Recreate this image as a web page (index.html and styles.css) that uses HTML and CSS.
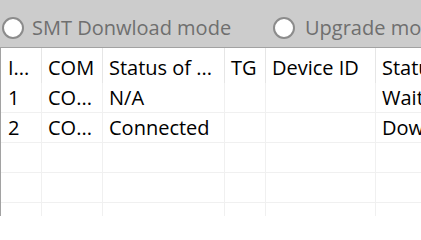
FILE: index.html
```html
<!DOCTYPE html>
<html>
<head>
<meta charset="utf-8">
<link rel="stylesheet" href="styles.css">
</head>
<body>
<div class="app">
  <div class="modes">
    <label class="radio"><span class="dot"></span><span class="txt">SMT Donwload mode</span></label>
    <label class="radio"><span class="dot"></span><span class="txt">Upgrade mode</span></label>
  </div>
  <div class="grid">
    <div class="row head">
      <div class="c c1">I...</div>
      <div class="c c2">COM</div>
      <div class="c c3">Status of ...</div>
      <div class="c c4">TG</div>
      <div class="c c5">Device ID</div>
      <div class="c c6">Status</div>
    </div>
    <div class="row">
      <div class="c c1">1</div>
      <div class="c c2">CO...</div>
      <div class="c c3">N/A</div>
      <div class="c c4"></div>
      <div class="c c5"></div>
      <div class="c c6">Waiting</div>
    </div>
    <div class="row">
      <div class="c c1">2</div>
      <div class="c c2">CO...</div>
      <div class="c c3">Connected</div>
      <div class="c c4"></div>
      <div class="c c5"></div>
      <div class="c c6">Downloading</div>
    </div>
    <div class="row">
      <div class="c c1"></div><div class="c c2"></div><div class="c c3"></div><div class="c c4"></div><div class="c c5"></div><div class="c c6"></div>
    </div>
    <div class="row">
      <div class="c c1"></div><div class="c c2"></div><div class="c c3"></div><div class="c c4"></div><div class="c c5"></div><div class="c c6"></div>
    </div>
    <div class="row">
      <div class="c c1"></div><div class="c c2"></div><div class="c c3"></div><div class="c c4"></div><div class="c c5"></div><div class="c c6"></div>
    </div>
  </div>
</div>
</body>
</html>
```

FILE: styles.css
```css
html, body {
  margin: 0;
  padding: 0;
  width: 421px;
  height: 216px;
  overflow: hidden;
  background: #ffffff;
  font-family: "Open Sans", "Noto Sans", sans-serif;
  font-size: 20px;
}

.app {
  width: 421px;
  height: 216px;
  overflow: hidden;
}

.modes {
  box-sizing: border-box;
  height: 48px;
  padding: 8px 0 0 2px;
  background: #cccccc;
  border-bottom: 1px solid #a2a2a2;
  display: grid;
  grid-template-columns: 271px auto;
  align-items: center;
  white-space: nowrap;
  overflow: hidden;
}

.radio {
  display: flex;
  align-items: center;
  color: #6f6f6f;
  line-height: 28px;
}

.dot {
  box-sizing: border-box;
  width: 22px;
  height: 22px;
  border-radius: 50%;
  border: 2px solid #8c8c8c;
  background: #ffffff;
  margin-right: 8px;
  flex: none;
}

.radio + .radio .dot {
  margin-right: 10px;
}

.grid {
  border-left: 1px solid #a2a2a2;
  height: 168px;
  color: #000000;
  white-space: nowrap;
}

.row {
  display: grid;
  grid-template-columns: 41px 61px 122px 41px 110px 200px;
  height: 30px;
}

.c {
  box-sizing: border-box;
  border-right: 1px solid #f0f0f0;
  border-bottom: 1px solid #f0f0f0;
  padding-left: 6px;
  line-height: 29px;
  overflow: hidden;
}

.head {
  height: 35px;
}

.head .c {
  border-bottom: none;
  border-right-color: #e6e6e6;
  padding-top: 5px;
  line-height: 30px;
}

.c1 {
  padding-left: 7px;
}
```
